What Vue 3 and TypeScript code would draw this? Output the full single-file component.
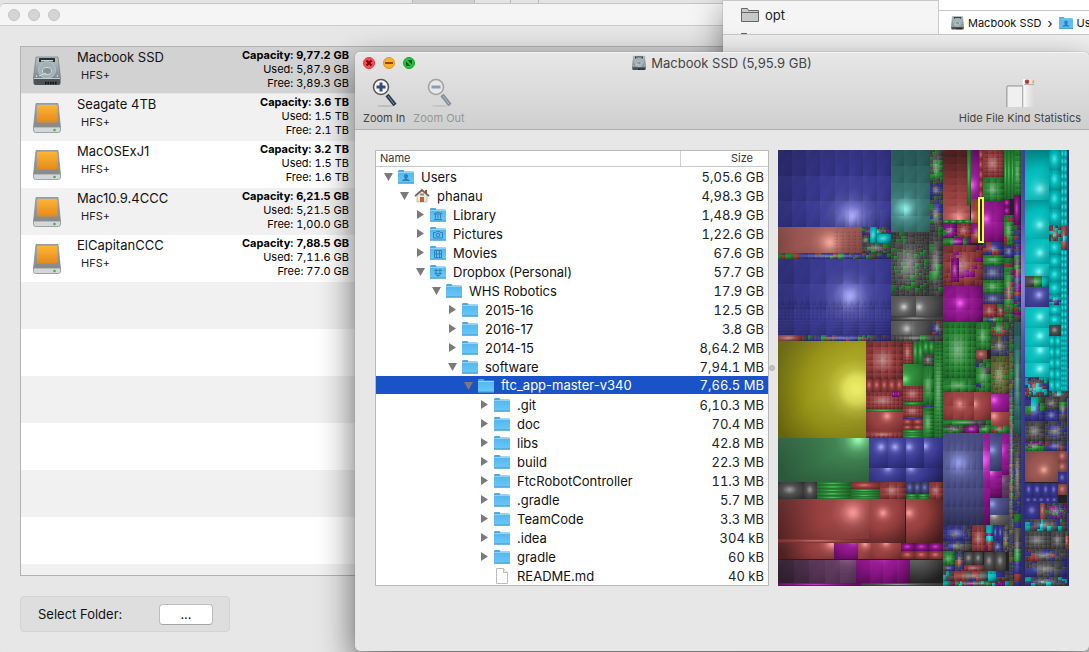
<script setup lang="ts">
interface Drive {
  name: string
  capacity: string
  used: string
  free: string
  internal?: boolean
}

interface TreeRow {
  name: string
  size: string
  depth: number
  state: 'open' | 'closed' | 'leaf'
  icon: 'users' | 'home' | 'library' | 'pictures' | 'movies' | 'dropbox' | 'folder' | 'file'
  selected?: boolean
}

const drives: Drive[] = [
  { name: 'Macbook SSD', capacity: '9,77.2 GB', used: '5,87.9 GB', free: '3,89.3 GB', internal: true },
  { name: 'Seagate 4TB', capacity: '3.6 TB', used: '1.5 TB', free: '2.1 TB' },
  { name: 'MacOSExJ1', capacity: '3.2 TB', used: '1.5 TB', free: '1.6 TB' },
  { name: 'Mac10.9.4CCC', capacity: '6,21.5 GB', used: '5,21.5 GB', free: '1,00.0 GB' },
  { name: 'ElCapitanCCC', capacity: '7,88.5 GB', used: '7,11.6 GB', free: '77.0 GB' },
]

const rows: TreeRow[] = [
  { name: 'Users', size: '5,05.6 GB', depth: 0, state: 'open', icon: 'users' },
  { name: 'phanau', size: '4,98.3 GB', depth: 1, state: 'open', icon: 'home' },
  { name: 'Library', size: '1,48.9 GB', depth: 2, state: 'closed', icon: 'library' },
  { name: 'Pictures', size: '1,22.6 GB', depth: 2, state: 'closed', icon: 'pictures' },
  { name: 'Movies', size: '67.6 GB', depth: 2, state: 'closed', icon: 'movies' },
  { name: 'Dropbox (Personal)', size: '57.7 GB', depth: 2, state: 'open', icon: 'dropbox' },
  { name: 'WHS Robotics', size: '17.9 GB', depth: 3, state: 'open', icon: 'folder' },
  { name: '2015-16', size: '12.5 GB', depth: 4, state: 'closed', icon: 'folder' },
  { name: '2016-17', size: '3.8 GB', depth: 4, state: 'closed', icon: 'folder' },
  { name: '2014-15', size: '8,64.2 MB', depth: 4, state: 'closed', icon: 'folder' },
  { name: 'software', size: '7,94.1 MB', depth: 4, state: 'open', icon: 'folder' },
  { name: 'ftc_app-master-v340', size: '7,66.5 MB', depth: 5, state: 'open', icon: 'folder', selected: true },
  { name: '.git', size: '6,10.3 MB', depth: 6, state: 'closed', icon: 'folder' },
  { name: 'doc', size: '70.4 MB', depth: 6, state: 'closed', icon: 'folder' },
  { name: 'libs', size: '42.8 MB', depth: 6, state: 'closed', icon: 'folder' },
  { name: 'build', size: '22.3 MB', depth: 6, state: 'closed', icon: 'folder' },
  { name: 'FtcRobotController', size: '11.3 MB', depth: 6, state: 'closed', icon: 'folder' },
  { name: '.gradle', size: '5.7 MB', depth: 6, state: 'closed', icon: 'folder' },
  { name: 'TeamCode', size: '3.3 MB', depth: 6, state: 'closed', icon: 'folder' },
  { name: '.idea', size: '304 kB', depth: 6, state: 'closed', icon: 'folder' },
  { name: 'gradle', size: '60 kB', depth: 6, state: 'closed', icon: 'folder' },
  { name: 'README.md', size: '40 kB', depth: 6, state: 'leaf', icon: 'file' },
]

// Tree map tones: highlight, middle, shade
const tones: Record<string, [string, string, string]> = {
  b: ['#acacff', '#383890', '#24245e'],
  n: ['#9aa2f0', '#44487e', '#20223c'],
  r: ['#ff9c9c', '#963e3e', '#4e2020'],
  s: ['#ffb0a0', '#985450', '#5a3430'],
  g: ['#70f080', '#2a8836', '#14481c'],
  e: ['#98ffb0', '#3a7a4c', '#2c5a3c'],
  t: ['#90f4f0', '#306866', '#204c4c'],
  c: ['#90ffff', '#00bcbc', '#006c6c'],
  k: ['#d0d0d0', '#505050', '#242424'],
  m: ['#ff60ff', '#8c1488', '#40083e'],
  p: ['#9a6a9a', '#5a365a', '#302030'],
  y: ['#ffff70', '#9a9618', '#66640e'],
  o: ['#c8c878', '#68683a', '#30301c'],
}

// A glow is one folder lit from a single point; a grid lights every file by itself; a mix holds many small files
type Glow = [number, number, number, number, string, number, number, number, number]
type Grid = [number, number, number, number, string, number, number]
type Mix = [number, number, number, number, string, number]

const glows: Glow[] = [
  [0, 0, 113, 77, 'b', 74, 66, 8, 3],
  [0, 77, 84, 26, 's', 52, 93, 1, 1],
  [0, 109, 113, 76, 'b', 72, 146, 7, 3],
  [113, 0, 39, 82, 't', 127, 59, 3, 5],
  [113, 146, 25, 20, 'k', 126, 157, 1, 1],
  [138, 146, 27, 20, 'k', 141, 157, 1, 1],
  [113, 171, 41, 14, 'k', 129, 179, 2, 1],
  [0, 191, 88, 97, 'y', 80, 240, 1, 1],
  [88, 262, 37, 19, 'r', 109, 266, 1, 1],
  [125, 214, 20, 22, 'g', 127, 229, 1, 1],
  [0, 288, 91, 44, 'e', 80, 289, 1, 1],
  [91, 288, 19, 30, 'b', 103, 297, 1, 1],
  [110, 288, 18, 30, 'b', 117, 297, 1, 1],
  [128, 288, 18, 30, 'b', 131, 297, 1, 1],
  [146, 288, 19, 30, 'b', 147, 296, 1, 1],
  [91, 318, 37, 14, 'b', 110, 318, 1, 1],
  [128, 318, 37, 14, 'b', 133, 318, 1, 1],
  [0, 349, 91, 44, 'r', 75, 363, 1, 1],
  [91, 349, 36, 44, 'r', 105, 363, 1, 1],
  [128, 349, 37, 44, 'r', 131, 363, 1, 1],
  [0, 393, 56, 16, 'r', 54, 394, 1, 1],
  [56, 393, 24, 16, 'm', 75, 390, 1, 1],
  [80, 393, 13, 16, 'r', 87, 394, 1, 1],
  [93, 393, 30, 16, 'r', 108, 393, 1, 1],
  [0, 410, 78, 23, 'p', 70, 405, 5, 1],
  [78, 410, 54, 23, 'm', 104, 402, 4, 1],
  [132, 410, 33, 23, 'k', 140, 402, 1, 1],
  [165, 0, 27, 70, 'r', 180, 68, 2, 10],
  [193, 0, 8, 49, 'm', 193, 35, 1, 1],
  [193, 49, 8, 24, 'r', 193, 66, 2, 2],
  [205, 51, 21, 41, 'm', 208, 69, 2, 2],
  [165, 136, 40, 36, 'm', 182, 153, 3, 3],
  [165, 242, 31, 28, 'r', 182, 254, 3, 2],
  [196, 242, 17, 28, 'r', 196, 254, 1, 1],
  [213, 244, 18, 18, 'm', 216, 250, 1, 1],
  [213, 262, 18, 13, 'r', 216, 266, 1, 1],
  [165, 283, 40, 92, 'n', 181, 313, 6, 5],
  [205, 283, 7, 92, 'm', 204, 310, 1, 5],
  [212, 283, 12, 38, 'n', 214, 300, 1, 1],
  [224, 283, 7, 42, 'm', 222, 300, 1, 4],
  [212, 321, 12, 27, 'm', 213, 322, 1, 4],
  [224, 325, 7, 23, 'p', 224, 330, 1, 3],
  [212, 348, 19, 17, 'n', 214, 354, 1, 1],
  [212, 365, 19, 10, 'k', 216, 365, 1, 1],
  [247, 0, 24, 50, 'c', 262, 39, 1, 1],
  [247, 50, 24, 39, 'c', 262, 75, 1, 1],
  [247, 89, 24, 25, 'c', 262, 103, 1, 1],
  [247, 114, 24, 12, 'c', 261, 122, 1, 1],
  [247, 137, 24, 20, 'b', 261, 145, 1, 1],
  [247, 157, 24, 21, 'c', 262, 167, 1, 1],
  [247, 178, 24, 19, 'c', 262, 186, 1, 1],
  [247, 197, 24, 16, 'c', 262, 200, 1, 1],
  [247, 213, 24, 14, 'c', 262, 219, 1, 1],
  [247, 301, 33, 31, 's', 266, 320, 1, 1],
  [243, 0, 4, 436, 'b', 218, 130, 1, 1],
]

const grids: Grid[] = [
  [113, 166, 52, 5, 'k', 1, 1],
  [88, 191, 37, 38, 'r', 5, 6],
  [88, 229, 37, 13, 'r', 5, 1],
  [88, 242, 37, 17, 'r', 9, 4],
  [114, 241, 8, 6, 'm', 3, 1],
  [88, 259, 37, 3, 'g', 1, 1],
  [88, 281, 37, 7, 'r', 8, 1],
  [125, 191, 10, 23, 'r', 3, 8],
  [135, 191, 10, 23, 'g', 2, 1],
  [125, 236, 20, 16, 'r', 6, 5],
  [125, 252, 20, 3, 'g', 1, 1],
  [125, 255, 20, 12, 'r', 7, 3],
  [125, 267, 20, 2, 'b', 1, 1],
  [125, 269, 20, 11, 'r', 2, 2],
  [125, 280, 20, 8, 'g', 1, 3],
  [145, 191, 11, 13, 'g', 2, 1],
  [145, 204, 11, 12, 'k', 3, 3],
  [145, 216, 11, 39, 'g', 2, 3],
  [145, 255, 11, 2, 'b', 1, 1],
  [145, 257, 11, 31, 'g', 1, 8],
  [156, 191, 9, 97, 'g', 2, 26],
  [0, 332, 26, 17, 'k', 1, 1],
  [26, 332, 13, 17, 'k', 1, 1],
  [39, 332, 34, 17, 'g', 1, 5],
  [73, 332, 29, 7, 'r', 1, 1],
  [73, 339, 29, 10, 'g', 1, 4],
  [102, 332, 26, 17, 'r', 3, 3],
  [128, 332, 23, 12, 'n', 3, 1],
  [128, 344, 23, 5, 'g', 2, 2],
  [151, 332, 14, 17, 'r', 2, 3],
  [0, 389, 91, 4, 'r', 1, 1],
  [123, 393, 42, 8, 'm', 3, 1],
  [123, 401, 42, 8, 'r', 3, 1],
  [0, 433, 83, 3, 'm', 1, 1],
  [83, 433, 82, 3, 'k', 1, 1],
  [165, 70, 28, 3, 'g', 4, 1],
  [189, 0, 4, 55, 'g', 1, 1],
  [201, 0, 4, 50, 'r', 1, 5],
  [205, 0, 21, 27, 'r', 4, 7],
  [205, 27, 21, 24, 'g', 3, 4],
  [226, 0, 10, 49, 'g', 3, 1],
  [236, 0, 7, 45, 'g', 2, 8],
  [236, 45, 6, 30, 'm', 1, 1],
  [226, 49, 6, 16, 'm', 1, 2],
  [165, 172, 33, 56, 'g', 6, 9],
  [165, 228, 33, 14, 'g', 4, 2],
  [198, 172, 15, 28, 'g', 3, 4],
  [198, 200, 11, 9, 's', 1, 1],
  [205, 105, 21, 10, 'g', 2, 3],
  [205, 115, 21, 15, 'n', 6, 2],
  [205, 130, 21, 13, 'g', 3, 4],
  [205, 143, 21, 11, 'n', 9, 2],
  [205, 154, 14, 13, 'r', 3, 2],
  [236, 172, 7, 112, 't', 2, 8],
  [280, 301, 9, 21, 's', 1, 2],
  [280, 322, 9, 12, 'b', 1, 1],
  [280, 334, 9, 11, 's', 1, 1],
  [247, 333, 33, 14, 'b', 4, 1],
  [247, 347, 33, 6, 'b', 5, 1],
  [247, 353, 15, 16, 'b', 1, 1],
  [262, 353, 5, 16, 's', 1, 1],
  [247, 381, 26, 18, 'k', 6, 4],
  [273, 381, 14, 18, 'k', 3, 3],
  [186, 402, 19, 13, 'k', 2, 1],
  [206, 402, 22, 19, 'k', 2, 1],
  [194, 375, 14, 26, 'r', 3, 4],
  [215, 375, 10, 16, 'b', 2, 1],
  [271, 0, 12, 20, 'c', 1, 1],
  [271, 20, 12, 20, 'c', 1, 1],
  [271, 40, 12, 19, 'c', 1, 1],
  [271, 59, 12, 16, 'c', 1, 1],
  [271, 91, 12, 54, 'c', 1, 4],
  [271, 155, 12, 20, 'c', 1, 2],
  [271, 175, 12, 11, 'k', 1, 1],
  [271, 186, 12, 55, 'c', 2, 5],
  [283, 0, 6, 76, 'c', 2, 10],
  [283, 100, 6, 86, 'c', 2, 14],
  [283, 186, 6, 60, 'c', 3, 12],
  [289, 0, 2, 436, 'b', 1, 6],
]

const mixes: Mix[] = [
  [84, 77, 29, 8, 'kkcgbm', 3],
  [92, 77, 7, 16, 'c', 20],
  [99, 84, 14, 9, 'c', 20],
  [84, 85, 8, 10, 'kkg', 3],
  [84, 93, 29, 10, 'kkkkg', 4],
  [0, 103, 113, 6, 'bbbbkrg', 5],
  [0, 185, 24, 6, 'rrs', 12],
  [24, 185, 89, 6, 'brkbrgb', 4],
  [152, 0, 13, 34, 'ggkk', 3],
  [152, 34, 13, 12, 'bbbk', 3],
  [152, 46, 13, 36, 'kkkgb', 3],
  [113, 82, 38, 64, 'kkkgk', 4],
  [151, 82, 14, 64, 'kkkgk', 5],
  [154, 171, 11, 14, 'rbk', 5],
  [113, 185, 52, 6, 'kkgk', 6],
  [165, 73, 14, 15, 'mgm', 4],
  [179, 73, 14, 15, 'rrr', 4],
  [165, 88, 28, 7, 'gmg', 5],
  [193, 73, 12, 20, 'gmr', 6],
  [165, 95, 40, 41, 'rrrmr', 6],
  [173, 108, 8, 24, 'm', 5],
  [205, 92, 21, 13, 'rrb', 6],
  [219, 154, 7, 13, 'rkg', 4],
  [205, 167, 21, 5, 'ggb', 5],
  [226, 65, 10, 30, 'ggr', 5],
  [226, 95, 10, 13, 'nnb', 4],
  [226, 108, 10, 64, 'gggrk', 5],
  [236, 75, 7, 97, 'bngrkm', 4],
  [247, 126, 24, 11, 'kcsgk', 6],
  [271, 75, 12, 16, 'ckrcg', 3],
  [271, 145, 12, 10, 'kcb', 3],
  [283, 76, 6, 24, 'kkcs', 5],
  [213, 172, 18, 14, 'rkg', 4],
  [213, 186, 18, 20, 'nonk', 4],
  [213, 206, 18, 38, 'ooog', 4],
  [198, 209, 15, 33, 'gbkgg', 5],
  [231, 172, 5, 264, 'kgnok', 3],
  [165, 270, 48, 5, 'gk', 12],
  [165, 275, 22, 8, 'kkkg', 4],
  [187, 275, 14, 8, 'm', 4],
  [201, 275, 12, 8, 'ggk', 4],
  [213, 275, 18, 8, 'grg', 5],
  [236, 284, 7, 80, 'kkkb', 3],
  [236, 364, 7, 72, 'rbgk', 8],
  [165, 375, 29, 16, 'bbbkn', 4],
  [165, 391, 29, 10, 'kkkb', 4],
  [208, 375, 7, 26, 'mrc', 5],
  [225, 375, 6, 27, 'okb', 3],
  [215, 391, 10, 11, 'bkn', 4],
  [165, 401, 12, 14, 'gg', 5],
  [177, 401, 9, 20, 'bkr', 3],
  [165, 415, 12, 6, 'kkb', 3],
  [186, 415, 20, 6, 'r', 9],
  [165, 421, 66, 10, 'kckbrk', 6],
  [165, 431, 66, 5, 'gkckm', 3],
  [247, 227, 24, 20, 'ckbrk', 3],
  [271, 241, 20, 7, 'kkc', 3],
  [247, 247, 20, 24, 'bbbckg', 6],
  [267, 247, 14, 12, 'kkk', 4],
  [267, 259, 14, 12, 'bb', 4],
  [281, 247, 8, 24, 'gbk', 4],
  [247, 271, 20, 20, 'kkkk', 5],
  [247, 291, 20, 10, 'mgk', 4],
  [267, 271, 22, 20, 'kkbk', 4],
  [267, 291, 22, 10, 'rbk', 6],
  [267, 353, 22, 16, 'kgbmk', 2],
  [247, 369, 42, 12, 'kkkcb', 5],
  [287, 381, 4, 18, 'kr', 3],
  [247, 399, 42, 12, 'kkrbk', 4],
  [247, 411, 42, 16, 'kkkbk', 6],
  [247, 427, 42, 9, 'kbkck', 3],
]

interface Cell {
  x: number
  y: number
  w: number
  h: number
  fill: string
}

function blend(from: string, to: string, share: number): string {
  const channel = (hex: string, at: number) => parseInt(hex.slice(at, at + 2), 16)
  const parts = [1, 3, 5].map((at) => Math.round(channel(from, at) * share + channel(to, at) * (1 - share)))
  return `rgb(${parts.join(', ')})`
}

// Distance from the light, and how much of the highlight is left there
function falloff(tone: string): [number, number][] {
  return tone === 'y'
    ? [[0.05, 0.95], [0.15, 0.8], [0.24, 0.42], [0.36, 0.18], [0.6, 0]]
    : [[0.04, 0.85], [0.1, 0.5], [0.17, 0.24], [0.27, 0.09], [0.45, 0]]
}

let seed = 20173
function random(): number {
  seed = (seed * 1664525 + 1013904223) % 4294967296
  return seed / 4294967296
}

const cells: Cell[] = []

function addGrid(x: number, y: number, w: number, h: number, cols: number, rowCount: number, fill: string): void {
  for (let c = 0; c < cols; c++) {
    for (let r = 0; r < rowCount; r++) {
      const x0 = x + Math.round((w * c) / cols)
      const x1 = x + Math.round((w * (c + 1)) / cols)
      const y0 = y + Math.round((h * r) / rowCount)
      const y1 = y + Math.round((h * (r + 1)) / rowCount)
      if (x1 > x0 && y1 > y0) cells.push({ x: x0, y: y0, w: x1 - x0, h: y1 - y0, fill })
    }
  }
}

function split(x: number, y: number, w: number, h: number, kinds: string, min: number): void {
  const small = w <= min * 2 && h <= min * 2
  if ((w <= min && h <= min) || (small && random() < 0.3)) {
    const tone = kinds[Math.floor(random() * kinds.length)]
    cells.push({ x, y, w, h, fill: `url(#flat-${tone})` })
    return
  }
  const ratio = 0.3 + random() * 0.4
  if (w >= h) {
    const a = Math.max(1, Math.round(w * ratio))
    split(x, y, a, h, kinds, min)
    split(x + a, y, w - a, h, kinds, min)
  } else {
    const a = Math.max(1, Math.round(h * ratio))
    split(x, y, w, a, kinds, min)
    split(x, y + a, w, h - a, kinds, min)
  }
}

glows.forEach(([x, y, w, h, , , , cols, rowCount], i) => {
  cells.push({ x, y, w, h, fill: `url(#glow-${i})` })
  addGrid(x, y, w, h, cols, rowCount, 'url(#relief)')
})
// Rows of ever smaller files inside the large lit folders
addGrid(56, 60, 57, 17, 5, 1, 'url(#relief)')
addGrid(54, 80, 30, 23, 5, 7, 'url(#relief)')
addGrid(0, 148, 113, 7, 18, 1, 'url(#relief)')
addGrid(0, 155, 113, 15, 28, 4, 'url(#relief)')
addGrid(0, 170, 113, 15, 1, 5, 'url(#relief)')
grids.forEach(([x, y, w, h, tone, cols, rowCount]) => {
  const lit = tone === 'c' || cols * rowCount <= 5
  addGrid(x, y, w, h, cols, rowCount, `url(#${lit ? 'tone' : 'flat'}-${tone})`)
  if (!lit) cells.push({ x, y, w, h, fill: 'url(#spot)' })
})
mixes.forEach(([x, y, w, h, kinds, min]) => {
  split(x, y, w, h, kinds, min)
  cells.push({ x, y, w, h, fill: 'url(#spot)' })
})
</script>

<template>
  <div class="desktop">
    <svg class="defs" width="0" height="0" aria-hidden="true">
      <defs>
        <linearGradient id="orange" x1="0" y1="0" x2="0" y2="1">
          <stop offset="0" stop-color="#fcb536" /><stop offset="1" stop-color="#e58a1c" />
        </linearGradient>
        <linearGradient id="steel" x1="0" y1="0" x2="0" y2="1">
          <stop offset="0" stop-color="#b8c4c8" /><stop offset="1" stop-color="#7c8a90" />
        </linearGradient>
        <linearGradient id="metal" x1="0" y1="0" x2="0" y2="1">
          <stop offset="0" stop-color="#a4a8aa" /><stop offset="1" stop-color="#858889" />
        </linearGradient>
        <linearGradient id="sky" x1="0" y1="0" x2="0" y2="1">
          <stop offset="0" stop-color="#55b8ee" /><stop offset="1" stop-color="#6bc8f8" />
        </linearGradient>
        <linearGradient id="pane" x1="0" y1="0" x2="1" y2="0">
          <stop offset="0" stop-color="#fff" /><stop offset="1" stop-color="#ddd" stop-opacity="0.4" />
        </linearGradient>
        <symbol id="hdd" viewBox="0 0 28 30">
          <path d="M3 1h22l2.500 21H.5z" fill="url(#steel)" stroke="#78848a" stroke-width=".8" />
          <path d="M.5 22h27v5q0 2-2 2h-23q-2 0-2-2z" fill="#4b5254" />
          <rect x="6" y="2" width="16" height="4" rx=".6" fill="#2a3136" />
          <rect x="8" y="4" width="12" height="1.500" fill="#c9d3d6" />
          <circle cx="14" cy="14" r="8.500" fill="#a3b0b5" stroke="#b4c1c6" />
          <ellipse cx="14" cy="15" rx="4.500" ry="3.500" fill="#84929a" stroke="#d0dadd" />
          <path d="M6 20l7-3" stroke="#d3dde0" />
          <circle cx="3.500" cy="20" r=".8" fill="#e4ebee" /><circle cx="24.500" cy="20" r=".8" fill="#e4ebee" />
          <path d="M1 22.500h26" stroke="#c6ced0" />
          <path d="M12 27h12" stroke="#111" stroke-width="2.500" stroke-dasharray="1.500 1" />
        </symbol>
        <symbol id="external" viewBox="0 0 28 30">
          <path d="M3 .5h22l2.500 24H.5z" fill="url(#metal)" stroke="#8a8d8e" stroke-width=".8" />
          <rect x="4" y="2" width="20.500" height="17.500" rx="1.500" fill="url(#orange)" />
          <path d="M.5 24h27v3q0 2.500-2 2.500h-23q-2 0-2-2.500z" fill="#d3d7da" stroke="#8e9192" stroke-width=".8" />
          <circle cx="21.500" cy="27" r="1.300" fill="#46b04a" />
        </symbol>
        <symbol id="icon-folder" viewBox="0 0 16 16">
          <path d="M0 2.500Q0 1 1 1h4.500l1 1.500H15q1 0 1 1V14.500H0z" fill="#4fa8d8" />
          <rect x="0" y="4" width="16" height="10" fill="url(#sky)" />
          <path d="M0 3.500h16" stroke="#8ed4f8" /><path d="M0 14h16" stroke="#3f97c8" />
        </symbol>
        <symbol id="mark-users" viewBox="0 0 16 16">
          <path d="M8 5c1.500 0 2 1 2 2.200S9.400 9 9 9.400c0 .8 3 .8 3 2.600H4c0-1.800 3-1.800 3-2.600C6.600 9 6 8.400 6 7.200S6.500 5 8 5z" fill="#2c82bb" />
        </symbol>
        <symbol id="mark-library" viewBox="0 0 16 16">
          <path d="M4 7l4-2 4 2zM4 12.500h8M5.500 7.500v4M8 7.500v4M10.500 7.500v4" fill="none" stroke="#2c82bb" />
        </symbol>
        <symbol id="mark-pictures" viewBox="0 0 16 16">
          <path d="M3.500 6.500h2l1-1h3l1 1h2v5.500h-9z" fill="none" stroke="#2c82bb" /><circle cx="8" cy="9" r="1.800" fill="none" stroke="#2c82bb" />
        </symbol>
        <symbol id="mark-movies" viewBox="0 0 16 16">
          <path d="M4.500 5.500h7v7h-7zM6.500 5.500v7M9.500 5.500v7M4.500 9h7" fill="none" stroke="#2c82bb" />
        </symbol>
        <symbol id="mark-dropbox" viewBox="0 0 16 16">
          <path d="M6 5l2 1.400L6 7.800 4 6.400zM10 5l2 1.400-2 1.400-2-1.400zM6 8l2 1.400-2 1.400-2-1.400zM10 8l2 1.400-2 1.400-2-1.400zM8 10.200l2 1.300-2 1.300-2-1.300z" fill="#2c82bb" />
        </symbol>
        <symbol id="icon-home" viewBox="0 0 16 16">
          <path d="M3 7l5-4.500L13 7v7H3z" fill="#eeeae2" stroke="#a49e94" stroke-width=".6" />
          <path d="M11 2h2v4h-2z" fill="#b8482c" />
          <path d="M1 8.200L8 2l7 6.200" fill="none" stroke="#6e665c" stroke-width="1.800" />
          <rect x="6" y="9" width="4" height="5" fill="#c4622e" /><rect x="6" y="5.500" width="4" height="2" fill="#9b8e80" />
        </symbol>
        <symbol id="icon-file" viewBox="0 0 16 16">
          <path d="M2.500 .5h7l4 4v11h-11z" fill="#fff" stroke="#bcbcbc" /><path d="M9.500 .5v4h4" fill="#eee" stroke="#bcbcbc" />
        </symbol>
      </defs>
    </svg>

    <div class="tabs"><span></span><span class="current"></span><span></span><span></span></div>

    <section class="window drives" aria-label="Drives">
      <header class="drives-bar">
        <button v-for="n in 3" :key="n" class="light" type="button" aria-label="Window control"></button>
      </header>
      <ul class="drive-list">
        <li v-for="drive in drives" :key="drive.name" class="drive" :class="{ current: drive.internal }">
          <svg class="drive-icon" viewBox="0 0 28 30"><use :href="drive.internal ? '#hdd' : '#external'" /></svg>
          <div class="drive-name">{{ drive.name }}<small>HFS+</small></div>
          <div class="drive-stats">
            <strong>Capacity: {{ drive.capacity }}</strong>
            <span>Used: {{ drive.used }}</span>
            <span>Free: {{ drive.free }}</span>
          </div>
        </li>
      </ul>
      <div class="select-folder">
        <label for="choose">Select Folder:</label>
        <button id="choose" class="choose" type="button">...</button>
      </div>
    </section>

    <section class="window finder" aria-label="Finder">
      <div class="finder-body">
        <div class="sidebar">
          <a class="side-item" href="#opt">
            <svg width="18" height="16" viewBox="0 0 18 16"><path d="M.5 14.500v-13h6l1 2h10v11zM.5 5.500h17" fill="#c8c8c8" stroke="#666" /></svg>
            opt
          </a>
          <i class="next-item"></i>
        </div>
        <nav class="path">
          <svg width="13" height="14" viewBox="0 0 28 30"><use href="#hdd" /></svg>
          <span>Macbook SSD</span>
          <span class="chevron">›</span>
          <svg width="14" height="14" viewBox="0 0 16 16"><use href="#icon-folder" /><use href="#mark-users" /></svg>
          <span>Us</span>
        </nav>
      </div>
    </section>

    <main class="window inventory">
      <header class="toolbar">
        <div class="title-row">
          <div class="lights">
            <button class="light close" type="button" aria-label="Close"><svg viewBox="0 0 12 12"><path d="M3.500 3.500l5 5M8.500 3.500l-5 5" stroke="#7a0408" stroke-width="2" /></svg></button>
            <button class="light minimise" type="button" aria-label="Minimise"><svg viewBox="0 0 12 12"><path d="M2 6h8" stroke="#8f4d05" stroke-width="2" /></svg></button>
            <button class="light full" type="button" aria-label="Full screen"><svg viewBox="0 0 12 12"><path d="M3 4.500v4.500h4.500zM4.500 3H9v4.500z" fill="#035c0d" /></svg></button>
          </div>
          <h1>
            <svg width="14" height="16" viewBox="0 0 28 30"><use href="#hdd" /></svg>
            Macbook SSD (5,95.9 GB)
          </h1>
        </div>
        <div class="tools">
          <button class="tool" type="button">
            <svg width="26" height="30" viewBox="0 0 26 30">
              <ellipse cx="14" cy="28" rx="8" ry="1" fill="#bcbcbc" />
              <path d="M16 17l8 10" stroke="#2c3850" stroke-width="4" /><path d="M17 18l6 8" stroke="#8894ac" />
              <circle cx="10" cy="9" r="7.500" fill="#f8f8f8" stroke="#545454" stroke-width="1.500" />
              <path d="M10 4.500v9M5.500 9h9" stroke="#34497c" stroke-width="3" />
            </svg>
            Zoom In
          </button>
          <button class="tool" type="button" disabled>
            <svg width="26" height="30" viewBox="0 0 26 30">
              <ellipse cx="14" cy="28" rx="8" ry="1" fill="#c4c4c4" />
              <path d="M16 17l8 10" stroke="#858c9a" stroke-width="4" /><path d="M17 18l6 8" stroke="#b4bbc8" />
              <circle cx="10" cy="9" r="7.500" fill="#e8e8e8" stroke="#a0a0a0" stroke-width="1.500" />
              <path d="M5.500 9h9" stroke="#8e9bb7" stroke-width="3" />
            </svg>
            Zoom Out
          </button>
          <button class="tool stats" type="button">
            <svg width="30" height="32" viewBox="0 0 30 32">
              <path d="M1 31V9.500q0-1 1-1h16V31" fill="#f0f0f0" /><path d="M1 31V9.500q0-1 1-1h16V31" fill="none" stroke="#888" />
              <path d="M18 31V2q0-1 1-1h11v30z" fill="url(#pane)" /><path d="M18 31V8M19 7h11" stroke="#aaa" />
              <circle cx="22.500" cy="4" r="2.500" fill="#c84440" /><path d="M22.500 2.500v3" stroke="#642" /><path d="M30 2a2 2 0 0 0 0 4z" fill="#e8aa54" />
            </svg>
            Hide File Kind Statistics
          </button>
        </div>
      </header>

      <div class="content">
        <table class="tree">
          <thead>
            <tr><th class="name-head" scope="col">Name</th><th class="size-head" scope="col">Size</th></tr>
          </thead>
          <tbody>
            <tr v-for="row in rows" :key="row.name" :class="{ selected: row.selected }">
              <td>
                <div class="entry" :style="{ paddingLeft: `${8 + row.depth * 16}px` }">
                  <button v-if="row.state !== 'leaf'" class="twist" type="button" :aria-label="`Toggle ${row.name}`">
                    <svg width="10" height="10" viewBox="0 0 10 10">
                      <path :d="row.state === 'open' ? 'M0 1h9L4.500 9z' : 'M1 0v9l7-4.500z'" fill="#7a7a7a" />
                    </svg>
                  </button>
                  <span v-else class="twist"></span>
                  <svg width="16" height="16" viewBox="0 0 16 16">
                    <use v-if="row.icon === 'home' || row.icon === 'file'" :href="`#icon-${row.icon}`" />
                    <template v-else>
                      <use href="#icon-folder" />
                      <use v-if="row.icon !== 'folder'" :href="`#mark-${row.icon}`" />
                    </template>
                  </svg>
                  <span>{{ row.name }}</span>
                </div>
              </td>
              <td class="size">{{ row.size }}</td>
            </tr>
          </tbody>
        </table>
        <div class="splitter"><i></i></div>
        <svg class="map" viewBox="0 0 291 436" role="img" aria-label="Disk usage by file" shape-rendering="crispEdges">
          <defs>
            <radialGradient v-for="(tone, key) in tones" :id="`tone-${key}`" :key="key" cx="0.45" cy="0.45" r="0.8">
              <stop offset="0" :stop-color="blend(tone[0], tone[1], 0.6)" />
              <stop offset="0.35" :stop-color="tone[1]" />
              <stop offset="1" :stop-color="tone[2]" />
            </radialGradient>
            <linearGradient v-for="(tone, key) in tones" :id="`flat-${key}`" :key="key" x1="0" y1="0" x2="1" y2="1">
              <stop offset="0" :stop-color="blend(tone[0], tone[1], 0.12)" />
              <stop offset="0.5" :stop-color="tone[1]" />
              <stop offset="1" :stop-color="blend(tone[1], tone[2], 0.3)" />
            </linearGradient>
            <radialGradient
              v-for="([, , w, h, tone, hx, hy], i) in glows"
              :id="`glow-${i}`"
              :key="i"
              gradientUnits="userSpaceOnUse"
              :cx="hx"
              :cy="hy"
              :r="Math.max(32, Math.max(w, h) * 0.9)"
            >
              <stop offset="0" :stop-color="tones[tone][0]" />
              <stop
                v-for="[offset, share] in falloff(tone)"
                :key="offset"
                :offset="offset"
                :stop-color="blend(tones[tone][0], tones[tone][1], share)"
              />
              <stop offset="1" :stop-color="tones[tone][2]" />
            </radialGradient>
            <radialGradient id="spot" cx="0.45" cy="0.5" r="0.65">
              <stop offset="0" stop-color="#fff" stop-opacity="0.4" />
              <stop offset="0.25" stop-color="#fff" stop-opacity="0.2" />
              <stop offset="0.5" stop-color="#fff" stop-opacity="0" />
              <stop offset="0.501" stop-color="#000" stop-opacity="0" />
              <stop offset="1" stop-color="#000" stop-opacity="0.3" />
            </radialGradient>
            <linearGradient id="relief" x1="0" y1="0" x2="1" y2="1">
              <stop offset="0" stop-color="#fff" stop-opacity="0.05" />
              <stop offset="0.5" stop-color="#000" stop-opacity="0" />
              <stop offset="1" stop-color="#000" stop-opacity="0.18" />
            </linearGradient>
          </defs>
          <rect width="291" height="436" fill="#222" />
          <rect v-for="(cell, i) in cells" :key="i" :x="cell.x" :y="cell.y" :width="cell.w" :height="cell.h" :fill="cell.fill" />
          <rect x="201" y="48" width="4" height="44" fill="#26265e" stroke="#ffff28" stroke-width="2" />
        </svg>
      </div>
    </main>
  </div>
</template>

<style>
body {
  background: #333;
}
</style>

<style scoped>
.desktop {
  position: relative;
  height: 100vh;
  overflow: hidden;
  background: #e4e4e4;
  color: #111;
  font: 13px/18px Inter, "Liberation Sans", sans-serif;
}
.desktop *,
.desktop *::before {
  box-sizing: border-box;
}
.defs {
  position: absolute;
}
button {
  padding: 0;
  border: 0;
  background: none;
  font: inherit;
  color: inherit;
}
.window {
  position: absolute;
}
.tabs {
  display: grid;
  grid-template-columns: 413px 62px 36px 28px;
  height: 6px;
}
.tabs span {
  border-right: 1px solid #bbb;
}
.tabs .current {
  background: #d0d0d0;
}

.drives {
  top: 3px;
  right: 360px;
  bottom: 0;
  left: 0;
  border-top: 1px solid #c4c4c4;
  border-radius: 5px 5px 0 5px;
  background: #e7e7e7;
}
.drives-bar {
  display: flex;
  gap: 8px;
  height: 22px;
  padding: 5px 8px;
  border-bottom: 1px solid #ccc;
  border-radius: 5px 5px 0 0;
  background: #f5f5f5;
}
.light {
  display: block;
  flex: none;
  width: 12px;
  height: 12px;
  border: 1px solid #c4c4c4;
  border-radius: 50%;
  background: #d5d5d5;
}
.drive-list {
  height: 530px;
  margin: 20px 0 0 20px;
  padding: 0;
  border: 1px solid #b2b2b2;
  background: repeating-linear-gradient(#fff 0 47px, #f1f1f1 47px 94px);
  list-style: none;
}
.drive {
  display: grid;
  grid-template-columns: 56px 138px 134px;
  height: 47px;
}
.drive.current {
  border-bottom: 1px solid #e8e8e8;
  background: #d2d2d2;
}
.drive-icon {
  width: 28px;
  height: 30px;
  margin: 9px 0 0 12px;
}
.drive-name {
  padding-top: 1px;
}
.drive-name small {
  display: block;
  padding-left: 4px;
  font-size: 11px;
  color: #222;
}
.drive-stats {
  display: flex;
  flex-direction: column;
  padding-top: 1px;
  font-size: 11px;
  font-variant-numeric: tabular-nums;
  line-height: 14px;
  text-align: right;
  color: #000;
}
.select-folder {
  display: flex;
  align-items: center;
  justify-content: space-between;
  width: 210px;
  height: 36px;
  margin: 20px;
  padding: 0 16px 0 17px;
  border: 1px solid #d3d3d3;
  border-radius: 4px;
  background: #dedede;
}
.choose {
  width: 54px;
  height: 21px;
  border: 1px solid #bdbdbd;
  border-bottom-color: #a4a4a4;
  border-radius: 4px;
  background: #fff;
}

.finder {
  top: 0;
  right: 0;
  left: 723px;
  height: 80px;
  background: #f0f0f0;
  box-shadow: 0 0 1px #777, 0 10px 32px rgba(0, 0, 0, 0.45);
}
.finder-body {
  display: grid;
  grid-template-columns: 216px 1fr;
  height: 35px;
  border-bottom: 1px solid #c8c8c8;
}
.sidebar {
  overflow: hidden;
  padding: 6px 18px 0;
  border-top: 1px solid #c8c8c8;
  border-right: 1px solid #ccc;
  background: #f5f5f5;
}
.side-item {
  display: flex;
  align-items: center;
  gap: 6px;
  height: 16px;
  color: #222;
  text-decoration: none;
}
.next-item {
  display: block;
  width: 6px;
  height: 1px;
  margin-top: 10px;
  background: #666;
}
.path {
  display: flex;
  align-items: center;
  gap: 4px;
  margin-top: 10px;
  padding-left: 12px;
  border-top: 1px solid #c8c8c8;
  background: #fff;
  font-size: 11px;
  white-space: nowrap;
  box-shadow: 0 -10px #fff;
}
.path svg {
  flex: none;
}
.chevron {
  margin: 0 2px;
  font-size: 13px;
}

.inventory {
  top: 52px;
  right: 0;
  bottom: 1px;
  left: 355px;
  border-radius: 5px;
  background: #e7e7e7;
  box-shadow: 0 0 1px #666, 0 14px 36px rgba(0, 0, 0, 0.6);
}
.toolbar {
  height: 78px;
  border-top: 1px solid #f4f4f4;
  border-bottom: 1px solid #b0b0b0;
  border-radius: 5px 5px 0 0;
  background: linear-gradient(#e7e7e7, #cfcfcf);
  color: #444;
}
.title-row {
  display: grid;
  grid-template-columns: 70px 1fr 70px;
  align-items: center;
  height: 20px;
}
.lights {
  display: flex;
  gap: 8px;
  padding-left: 8px;
}
.lights .light svg {
  display: block;
  width: 12px;
  height: 12px;
  margin: -1px;
}
.light.close {
  border-color: #dc3c40;
  background: #fc4a4e;
}
.light.minimise {
  border-color: #dc9628;
  background: #fdb02e;
}
.light.full {
  border-color: #18a62e;
  background: #22c33c;
}
h1 {
  display: flex;
  align-items: center;
  justify-content: center;
  gap: 5px;
  margin: 0;
  font-size: 13px;
  font-weight: 400;
  line-height: 20px;
}
.tools {
  display: flex;
  gap: 8px;
  padding: 5px 8px;
}
.tool {
  display: flex;
  flex-direction: column;
  align-items: center;
  justify-content: flex-end;
  height: 48px;
  font-size: 11px;
  line-height: 16px;
}
.tool svg {
  margin-bottom: 2px;
}
.tool:disabled {
  color: #969696;
}
.tool.stats {
  margin-left: auto;
}
.content {
  display: flex;
  align-items: flex-start;
  padding: 20px 20px 0;
}
.tree {
  flex: none;
  width: 394px;
  border: 1px solid #b8b8b8;
  border-collapse: separate;
  border-spacing: 0;
  background: #fff;
}
.tree th {
  height: 16px;
  padding: 0 4px;
  border-bottom: 1px solid #c8c8c8;
  font-size: 11px;
  font-weight: 400;
  line-height: 15px;
  text-align: left;
  color: #333;
}
.tree .size-head {
  width: 88px;
  padding-right: 15px;
  border-left: 1px solid #d0d0d0;
  text-align: right;
}
.tree td {
  height: 19px;
  padding: 1px 4px 0 0;
  line-height: 18px;
}
.tree td:first-child {
  padding: 1px 0 0;
}
.entry {
  display: flex;
  align-items: center;
  height: 18px;
  white-space: nowrap;
}
.entry > svg {
  flex: none;
  margin-right: 7px;
}
.twist {
  flex: none;
  width: 10px;
  height: 10px;
  margin-right: 4px;
}
.twist svg {
  display: block;
}
.tree .size {
  font-variant-numeric: tabular-nums;
  text-align: right;
  white-space: nowrap;
  color: #222;
}
.tree .selected td {
  border-bottom: 1px solid #fff;
  background: #1a53c8;
  background-clip: padding-box;
  color: #fff;
  line-height: 17px;
}
.tree .selected .entry {
  height: 17px;
}
.splitter {
  display: flex;
  flex: none;
  align-items: center;
  align-self: stretch;
  width: 9px;
}
.splitter i {
  width: 6px;
  height: 6px;
  border: 1px solid #b0b0b0;
  border-radius: 50%;
  background: #c4c4c4;
}
.map {
  display: block;
  flex: 1;
  min-width: 0;
  height: auto;
}
</style>
